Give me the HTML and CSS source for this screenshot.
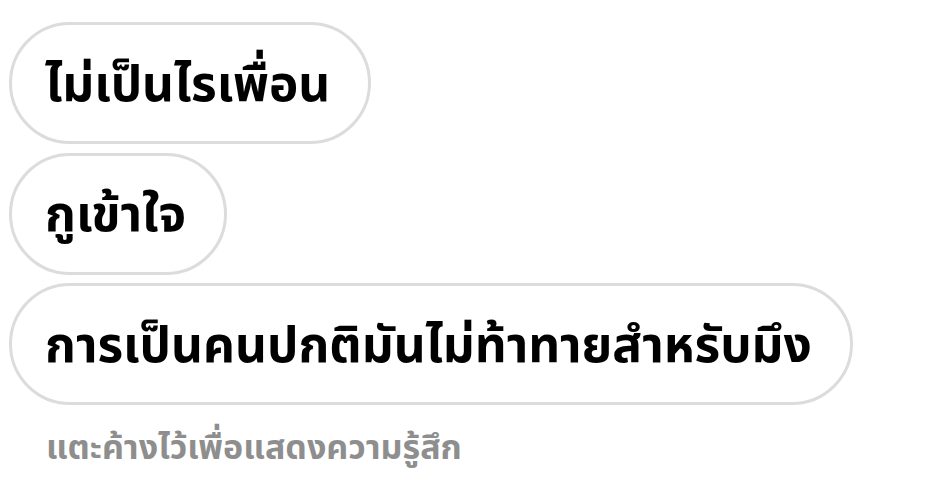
FILE: index.html
```html
<!DOCTYPE html>
<html lang="th">
<head>
<meta charset="utf-8">
<link rel="stylesheet" href="styles.css">
</head>
<body>
<div class="thread">
  <div class="bubble">ไม่เป็นไรเพื่อน</div>
  <div class="bubble">กูเข้าใจ</div>
  <div class="bubble">การเป็นคนปกติมันไม่ท้าทายสำหรับมึง</div>
  <div class="hint">แตะค้างไว้เพื่อแสดงความรู้สึก</div>
</div>
</body>
</html>
```
FILE: styles.css
```css
html, body {
  margin: 0;
  background: #ffffff;
}
.thread {
  display: flex;
  flex-direction: column;
  align-items: flex-start;
  gap: 8.5px;
  padding: 22px 0 0 9px;
  font-family: "Noto Sans Thai", "Noto Sans", sans-serif;
}
.bubble {
  box-sizing: border-box;
  height: 122px;
  display: flex;
  align-items: center;
  padding: 4px 38px 0 33px;
  border: 3px solid #dcdcdc;
  border-radius: 61px;
  font-size: 49.5px;
  font-weight: 700;
  color: #000000;
  white-space: nowrap;
}
.hint {
  margin: 9px 0 0 37px;
  font-size: 34px;
  font-weight: 700;
  color: #8e8e8e;
}
```
